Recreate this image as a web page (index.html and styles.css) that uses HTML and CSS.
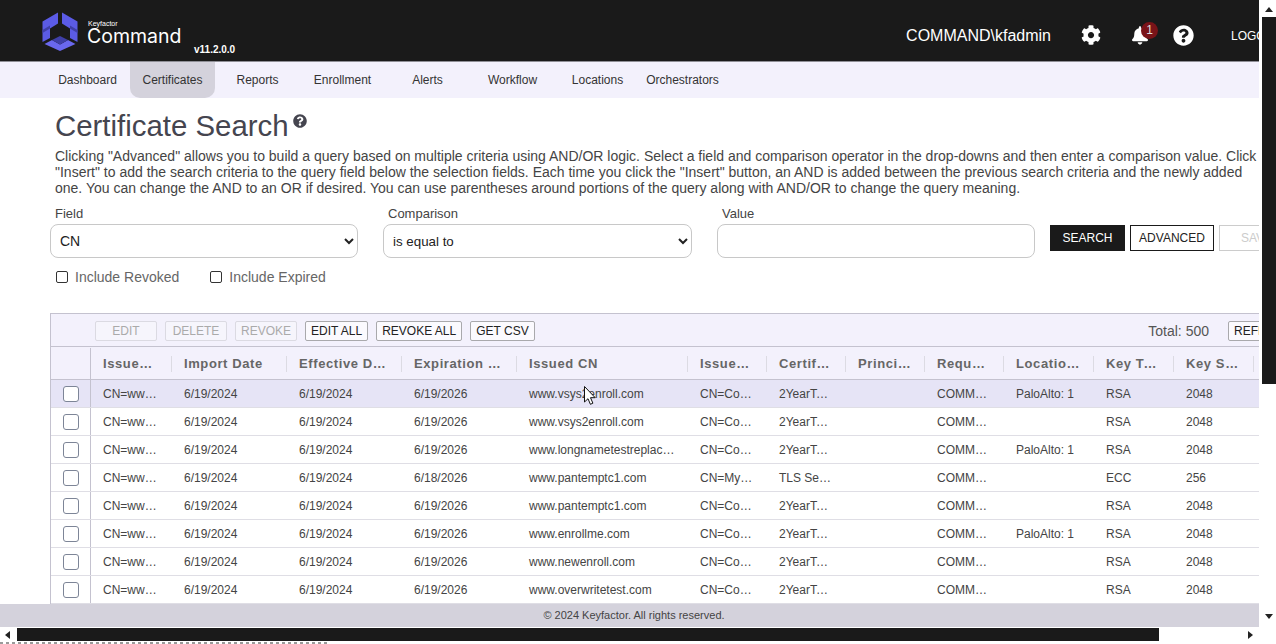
FILE: index.html
```html
<!DOCTYPE html>
<html lang="en">
<head>
<meta charset="utf-8">
<title>Certificate Search</title>
<link rel="stylesheet" href="styles.css">
</head>
<body>
<div class="app">
  <div class="page">
    <header class="topbar">
      <svg class="logo" viewBox="0 0 36 39" aria-hidden="true">
        <path class="logo-a" d="M16 0.5V11.5L8 16.5V26L0.5 30V9.5Z"/>
        <path class="logo-b" d="M20 0.5L35.5 9.5V30L28 26V16.5L20 11.5Z"/>
        <path class="logo-c" d="M18 39L2.5 32L10 28L18 32.5L26 28L33.5 32Z"/>
        <path class="logo-d" d="M0.5 18L8 13.5V16.5L0.5 21ZM35.5 18L28 13.5V16.5L35.5 21ZM10 28L18 24L26 28L18 32.5Z"/>
      </svg>
      <div class="brand">
        <span class="brand-small">Keyfactor</span>
        <span class="brand-big">Command</span>
      </div>
      <span class="version">v11.2.0.0</span>
      <div class="spacer"></div>
      <span class="user">COMMAND\kfadmin</span>
      <svg class="icon-gear" viewBox="0 0 512 512" aria-hidden="true"><path d="M487.4 315.7l-42.6-24.6c4.3-23.2 4.3-47 0-70.2l42.6-24.6c4.9-2.8 7.1-8.6 5.5-14-11.1-35.6-30-67.8-54.7-94.6-3.8-4.1-10-5.1-14.8-2.3L380.8 110c-17.9-15.4-38.5-27.3-60.8-35.1V25.8c0-5.6-3.9-10.5-9.4-11.7-36.7-8.2-74.3-7.8-109.2 0-5.5 1.2-9.4 6.1-9.4 11.7V75c-22.2 7.9-42.8 19.8-60.8 35.1L88.7 85.5c-4.9-2.8-11-1.9-14.8 2.3-24.7 26.7-43.6 58.9-54.7 94.6-1.7 5.4.6 11.2 5.5 14L67.3 221c-4.3 23.2-4.3 47 0 70.2l-42.6 24.6c-4.9 2.8-7.1 8.6-5.5 14 11.1 35.6 30 67.8 54.7 94.6 3.8 4.1 10 5.1 14.8 2.3l42.6-24.6c17.9 15.4 38.5 27.3 60.8 35.1v49.2c0 5.6 3.9 10.5 9.4 11.7 36.7 8.2 74.3 7.8 109.2 0 5.5-1.2 9.4-6.1 9.4-11.7v-49.2c22.2-7.9 42.8-19.8 60.8-35.1l42.6 24.6c4.9 2.8 11 1.9 14.8-2.3 24.7-26.7 43.6-58.9 54.7-94.6 1.5-5.5-.7-11.3-5.6-14.1zM256 336c-44.1 0-80-35.9-80-80s35.9-80 80-80 80 35.9 80 80-35.9 80-80 80z"/></svg>
      <div class="bell">
        <svg class="icon-bell" viewBox="0 0 448 512" aria-hidden="true"><path d="M224 512c35.32 0 63.97-28.65 63.97-64H160.03c0 35.35 28.65 64 63.97 64zm215.39-149.71c-19.32-20.76-55.47-51.99-55.47-154.29 0-77.7-54.48-139.9-127.94-155.16V32c0-17.67-14.32-32-31.98-32s-31.98 14.33-31.98 32v20.84C118.56 68.1 64.08 130.3 64.08 208c0 102.3-36.15 133.53-55.47 154.29-6 6.45-8.66 14.16-8.61 21.71.11 16.4 12.98 32 32.1 32h383.8c19.12 0 32-15.6 32.1-32 .05-7.55-2.61-15.27-8.61-21.71z"/></svg>
        <span class="badge">1</span>
      </div>
      <svg class="icon-help" viewBox="0 0 512 512" aria-hidden="true"><path d="M504 256c0 136.997-111.043 248-248 248S8 392.997 8 256C8 119.083 119.043 8 256 8s248 111.083 248 248zM262.655 90c-54.497 0-89.255 22.957-116.549 63.758-3.536 5.286-2.353 12.415 2.715 16.258l34.699 26.31c5.205 3.947 12.621 3.008 16.665-2.122 17.864-22.658 30.113-35.797 57.303-35.797 20.429 0 45.698 13.148 45.698 32.958 0 14.976-12.363 22.667-32.534 33.976C247.128 238.528 216 254.941 216 296v4c0 6.627 5.373 12 12 12h56c6.627 0 12-5.373 12-12v-1.333c0-28.462 83.186-29.647 83.186-106.667 0-58.002-60.165-102-116.531-102zM256 338c-25.365 0-46 20.635-46 46 0 25.364 20.635 46 46 46s46-20.636 46-46c0-25.365-20.635-46-46-46z"/></svg>
      <span class="logout">LOGOUT</span>
    </header>
    <nav class="nav">
      <a class="nav-item">Dashboard</a>
      <a class="nav-item nav-active">Certificates</a>
      <a class="nav-item">Reports</a>
      <a class="nav-item">Enrollment</a>
      <a class="nav-item">Alerts</a>
      <a class="nav-item">Workflow</a>
      <a class="nav-item">Locations</a>
      <a class="nav-item">Orchestrators</a>
    </nav>
    <main class="content">
      <div class="title-row">
        <h1 class="title">Certificate Search</h1>
        <svg class="icon-title-help" viewBox="0 0 512 512" aria-hidden="true"><path d="M504 256c0 136.997-111.043 248-248 248S8 392.997 8 256C8 119.083 119.043 8 256 8s248 111.083 248 248zM262.655 90c-54.497 0-89.255 22.957-116.549 63.758-3.536 5.286-2.353 12.415 2.715 16.258l34.699 26.31c5.205 3.947 12.621 3.008 16.665-2.122 17.864-22.658 30.113-35.797 57.303-35.797 20.429 0 45.698 13.148 45.698 32.958 0 14.976-12.363 22.667-32.534 33.976C247.128 238.528 216 254.941 216 296v4c0 6.627 5.373 12 12 12h56c6.627 0 12-5.373 12-12v-1.333c0-28.462 83.186-29.647 83.186-106.667 0-58.002-60.165-102-116.531-102zM256 338c-25.365 0-46 20.635-46 46 0 25.364 20.635 46 46 46s46-20.636 46-46c0-25.365-20.635-46-46-46z"/></svg>
      </div>
      <p class="intro">Clicking "Advanced" allows you to build a query based on multiple criteria using AND/OR logic. Select a field and comparison operator in the drop-downs and then enter a comparison value. Click "Insert" to add the search criteria to the query field below the selection fields. Each time you click the "Insert" button, an AND is added between the previous search criteria and the newly added one. You can change the AND to an OR if desired. You can use parentheses around portions of the query along with AND/OR to change the query meaning.</p>
      <div class="search-row">
        <div class="field">
          <label class="field-label">Field</label>
          <select class="control select-cn"><option>CN</option></select>
        </div>
        <div class="field">
          <label class="field-label">Comparison</label>
          <select class="control select-cmp"><option>is equal to</option></select>
        </div>
        <div class="field">
          <label class="field-label">Value</label>
          <input class="control input-value" type="text">
        </div>
        <div class="search-actions">
          <button class="btn-search">SEARCH</button>
          <button class="btn-advanced">ADVANCED</button>
          <button class="btn-save">SAVE</button>
        </div>
      </div>
      <div class="include-row">
        <label class="include"><input class="check-small" type="checkbox"><span>Include Revoked</span></label>
        <label class="include"><input class="check-small" type="checkbox"><span>Include Expired</span></label>
      </div>
      <section class="grid">
        <div class="toolbar">
          <button class="tool tool-edit" disabled>EDIT</button>
          <button class="tool tool-edit" disabled>DELETE</button>
          <button class="tool tool-edit" disabled>REVOKE</button>
          <button class="tool">EDIT ALL</button>
          <button class="tool">REVOKE ALL</button>
          <button class="tool">GET CSV</button>
          <span class="total">Total: 500</span>
          <button class="tool tool-refresh">REFRESH</button>
        </div>
        <div class="row head">
          <div class="cell-check"></div>
          <div class="th">Issued DN</div><div class="th">Import Date</div><div class="th">Effective Date</div><div class="th">Expiration Date</div><div class="th">Issued CN</div><div class="th">Issuer DN</div><div class="th">Certificate</div><div class="th">Principal</div><div class="th">Requester</div><div class="th">Locations</div><div class="th">Key Type</div><div class="th">Key Size</div>
        </div>
        <div class="row row-selected">
          <div class="cell-check"><input class="check" type="checkbox"></div>
          <div class="td">CN=www.vsys2</div><div class="td">6/19/2024</div><div class="td">6/19/2024</div><div class="td">6/19/2026</div><div class="td">www.vsys2enroll.com</div><div class="td">CN=Command</div><div class="td">2YearTestWeb</div><div class="td"></div><div class="td">COMMAND\a</div><div class="td">PaloAlto: 1</div><div class="td">RSA</div><div class="td">2048</div>
        </div>
        <div class="row">
          <div class="cell-check"><input class="check" type="checkbox"></div>
          <div class="td">CN=www.vsys2</div><div class="td">6/19/2024</div><div class="td">6/19/2024</div><div class="td">6/19/2026</div><div class="td">www.vsys2enroll.com</div><div class="td">CN=Command</div><div class="td">2YearTestWeb</div><div class="td"></div><div class="td">COMMAND\a</div><div class="td"></div><div class="td">RSA</div><div class="td">2048</div>
        </div>
        <div class="row">
          <div class="cell-check"><input class="check" type="checkbox"></div>
          <div class="td">CN=www.long</div><div class="td">6/19/2024</div><div class="td">6/19/2024</div><div class="td">6/19/2026</div><div class="td">www.longnametestreplacement.com</div><div class="td">CN=Command</div><div class="td">2YearTestWeb</div><div class="td"></div><div class="td">COMMAND\a</div><div class="td">PaloAlto: 1</div><div class="td">RSA</div><div class="td">2048</div>
        </div>
        <div class="row">
          <div class="cell-check"><input class="check" type="checkbox"></div>
          <div class="td">CN=www.pant</div><div class="td">6/19/2024</div><div class="td">6/19/2024</div><div class="td">6/18/2026</div><div class="td">www.pantemptc1.com</div><div class="td">CN=MyIssuing</div><div class="td">TLS Server</div><div class="td"></div><div class="td">COMMAND\a</div><div class="td"></div><div class="td">ECC</div><div class="td">256</div>
        </div>
        <div class="row">
          <div class="cell-check"><input class="check" type="checkbox"></div>
          <div class="td">CN=www.pant</div><div class="td">6/19/2024</div><div class="td">6/19/2024</div><div class="td">6/19/2026</div><div class="td">www.pantemptc1.com</div><div class="td">CN=Command</div><div class="td">2YearTestWeb</div><div class="td"></div><div class="td">COMMAND\a</div><div class="td"></div><div class="td">RSA</div><div class="td">2048</div>
        </div>
        <div class="row">
          <div class="cell-check"><input class="check" type="checkbox"></div>
          <div class="td">CN=www.enroll</div><div class="td">6/19/2024</div><div class="td">6/19/2024</div><div class="td">6/19/2026</div><div class="td">www.enrollme.com</div><div class="td">CN=Command</div><div class="td">2YearTestWeb</div><div class="td"></div><div class="td">COMMAND\a</div><div class="td">PaloAlto: 1</div><div class="td">RSA</div><div class="td">2048</div>
        </div>
        <div class="row">
          <div class="cell-check"><input class="check" type="checkbox"></div>
          <div class="td">CN=www.newe</div><div class="td">6/19/2024</div><div class="td">6/19/2024</div><div class="td">6/19/2026</div><div class="td">www.newenroll.com</div><div class="td">CN=Command</div><div class="td">2YearTestWeb</div><div class="td"></div><div class="td">COMMAND\a</div><div class="td"></div><div class="td">RSA</div><div class="td">2048</div>
        </div>
        <div class="row">
          <div class="cell-check"><input class="check" type="checkbox"></div>
          <div class="td">CN=www.over</div><div class="td">6/19/2024</div><div class="td">6/19/2024</div><div class="td">6/19/2026</div><div class="td">www.overwritetest.com</div><div class="td">CN=Command</div><div class="td">2YearTestWeb</div><div class="td"></div><div class="td">COMMAND\a</div><div class="td"></div><div class="td">RSA</div><div class="td">2048</div>
        </div>
      </section>
      <svg class="cursor" viewBox="0 0 12 19" aria-hidden="true"><path d="M0.5 0.5V16L4 12.7L6.4 18.3L8.9 17.2L6.5 11.7H11.2Z"/></svg>
    </main>
    <footer class="footer">© 2024 Keyfactor. All rights reserved.</footer>
  </div>
  <div class="vbar">
    <span class="arrow-up"></span>
    <div class="vthumb"></div>
    <div class="spacer"></div>
    <span class="arrow-down"></span>
  </div>
  <div class="hbar">
    <span class="arrow-left"></span>
    <div class="hthumb"></div>
    <div class="spacer"></div>
    <span class="arrow-right"></span>
  </div>
</div>
</body>
</html>
```
FILE: styles.css
```css
* { box-sizing: border-box; }
html, body { margin: 0; height: 100%; overflow: hidden; background: #fff; }
body { font-family: "Liberation Sans", Arial, sans-serif; color: #444; }
.app { display: grid; grid-template-columns: 1259px 17px; grid-template-rows: 627px 17px; height: 644px; width: 1276px; }
.page { display: flex; flex-direction: column; overflow: hidden; min-width: 0; }
.spacer { flex: 1; }

.topbar { flex: 0 0 62px; display: flex; align-items: center; background: #1a1a1a; border-bottom: 1px solid #8f8f96; color: #fff; padding: 9px 0 0 42px; overflow: hidden; }
.logo { width: 36px; height: 39px; flex: none; margin-top: -7px; }
.logo-a { fill: #5b5be6; }
.logo-b { fill: #5b5be6; }
.logo-c { fill: #6a68ee; }
.logo-d { fill: #3f3fa8; }
.brand { display: flex; flex-direction: column; margin-left: 9px; margin-top: -6px; }
.brand-small { font-size: 7px; font-weight: 400; line-height: 8px; padding-left: 1px; }
.brand-big { font-family: Inter, sans-serif; font-size: 19.5px; line-height: 16px; width: 98px; }
.version { font-size: 10px; font-weight: 700; margin-left: 9px; margin-top: 29px; }
.user { font-size: 16px; margin: 2px 30px 0 0; }
.icon-gear { width: 20px; height: 20px; fill: #fff; margin-right: 31px; flex: none; }
.bell { position: relative; width: 16px; height: 19px; margin-right: 25px; flex: none; }
.icon-bell { width: 16px; height: 19px; fill: #fff; display: block; }
.badge { position: absolute; left: 9px; top: -4px; width: 17px; height: 17px; border-radius: 50%; background: #7a1318; font-size: 12px; line-height: 17px; text-align: center; color: #ddd; }
.icon-help { width: 21px; height: 21px; fill: #fff; margin-right: 37px; flex: none; }
.logout { font-size: 12px; width: 28px; overflow: hidden; white-space: nowrap; flex: none; margin-top: 2px; }

.nav { flex: 0 0 36px; display: flex; background: #f3f1fc; padding-left: 45px; }
.nav-item { width: 85px; font-size: 12px; line-height: 36px; text-align: center; color: #333; }
.nav-active { background: #d4d2dc; border-radius: 0 0 10px 10px; }

.content { flex: 1; min-height: 0; overflow: hidden; padding-left: 50px; position: relative; }
.title-row { display: flex; align-items: flex-start; height: 50px; padding: 10px 0 0 5px; }
.title { margin: 0; font-size: 29.4px; font-weight: 400; line-height: 36px; color: #45454f; }
.icon-title-help { width: 14px; height: 14px; fill: #45454f; margin: 6px 0 0 4px; }
.intro { margin: 0 0 0 5px; width: 1204px; font-size: 14px; line-height: 16px; color: #444; }

.search-row { display: flex; margin-top: 10px; }
.field { display: flex; flex-direction: column; margin-right: 25px; }
.field-label { font-size: 13px; line-height: 14px; padding: 1px 0 0 5px; margin-bottom: 3px; color: #444; }
.control { height: 34px; border: 1px solid #c8c8c8; border-radius: 8px; background: #fff; font-family: "Liberation Sans", Arial, sans-serif; font-size: 13.33px; color: #222; padding: 0 5px; }
.select-cn { width: 308px; font-size: 14px; }
.select-cmp { width: 309px; }
.input-value { width: 318px; }
.search-actions { display: flex; gap: 5px; margin: 19px 0 0 -10px; }
.search-actions button { height: 26px; font-family: inherit; font-size: 12px; padding: 0; }
.btn-search { width: 75px; background: #1a1a1a; color: #fff; border: 1px solid #1a1a1a; }
.btn-advanced { width: 84px; background: #fff; color: #222; border: 1px solid #1a1a1a; }
.btn-save { width: 75px; background: #fff; color: #ccc; border: 1px solid #ccc; }

.include-row { display: flex; margin-top: 11px; padding-left: 6px; }
.include { display: flex; align-items: center; font-size: 14px; color: #666; line-height: 16px; margin-right: 30px; }
.include + .include { margin-left: 1px; }
.check-small { appearance: none; width: 12px; height: 12px; margin: 0 7px 0 0; border: 1px solid #333; border-radius: 2px; background: #fff; }

.grid { margin-top: 28px; border: 1px solid #c4c2cf; border-right: 0; border-bottom: 0; width: 1220px; }
.toolbar { display: flex; align-items: center; height: 33px; background: #f3f1fc; border-bottom: 1px solid #c4c2cf; padding: 2px 0 0 44px; }
.tool { height: 20px; margin-right: 8px; padding: 0 5px; font-family: inherit; font-size: 12px; color: #222; background: #fbfafe; border: 1px solid #a9a9ac; border-radius: 2px; white-space: nowrap; }
.tool-edit { width: 62px; color: #aaa; border-color: #dbdae2; background: #f6f5fc; }
.total { margin-left: auto; margin-right: 19px; font-size: 14px; color: #555; }
.tool-refresh { width: 80px; margin-right: -38px; text-align: left; flex: none; }

.row { display: grid; grid-template-columns: 40px 81px 115px 115px 115px 171px 79px 79px 79px 79px 90px 80px 80px; height: 28px; border-bottom: 1px solid #dfdee5; align-items: center; font-size: 12px; background: #fff; }
.row.head { height: 33px; background: #f3f1fc; border-bottom: 1px solid #c4c2cf; padding-top: 1px; }
.row-selected { background: #e6e4f6; }
.cell-check { height: 100%; border-right: 1px solid #c4c2cf; display: flex; align-items: center; justify-content: center; }
.check { appearance: none; width: 16px; height: 16px; margin: 0; border: 1px solid #7d8597; border-radius: 3px; background: #fff; }
.th, .td { padding: 0 13px 0 12px; overflow: hidden; white-space: nowrap; text-overflow: ellipsis; }
.th { font-size: 13px; font-weight: 700; letter-spacing: 0.6px; color: #666; line-height: 16px; height: 16px; border-right: 1px solid #dcdbe3; padding-right: 12px; }
.td { color: #444; line-height: 16px; }

.cursor { position: absolute; left: 584px; top: 288px; width: 12px; height: 19px; }
.cursor path { fill: #fff; stroke: #111; stroke-width: 1; }

.footer { flex: 0 0 23px; background: #d4d2dc; font-size: 11px; line-height: 23px; text-align: center; padding-left: 9px; color: #444; }

.vbar { grid-row: 1; grid-column: 2; display: flex; flex-direction: column; align-items: flex-end; background: #fff; padding-bottom: 3px; }
.vthumb { width: 14px; height: 367px; background: #1a1a1a; }
.arrow-up, .arrow-down, .arrow-left, .arrow-right { width: 0; height: 0; border-style: solid; flex: none; }
.arrow-up { border-width: 0 4px 5px; border-color: transparent transparent #222; margin: 7px 3px 5px 0; }
.arrow-down { border-width: 5px 4px 0; border-color: #222 transparent transparent; margin: 0 3px 5px 0; }
.hbar { grid-row: 2; grid-column: 1 / 3; display: flex; align-items: flex-start; padding-top: 1px; background: repeating-linear-gradient(90deg, #9a9a9a 0 3px, #fff 3px 6px) left bottom / 330px 2px no-repeat, #fff; }
.arrow-left { border-width: 4px 5px 4px 0; border-color: transparent #222 transparent transparent; margin: 3px 7px 0 5px; }
.arrow-right { border-width: 4px 0 4px 5px; border-color: transparent transparent transparent #222; margin: 3px 23px 0 0; }
.hthumb { width: 1142px; height: 13px; background: #1a1a1a; }
```
